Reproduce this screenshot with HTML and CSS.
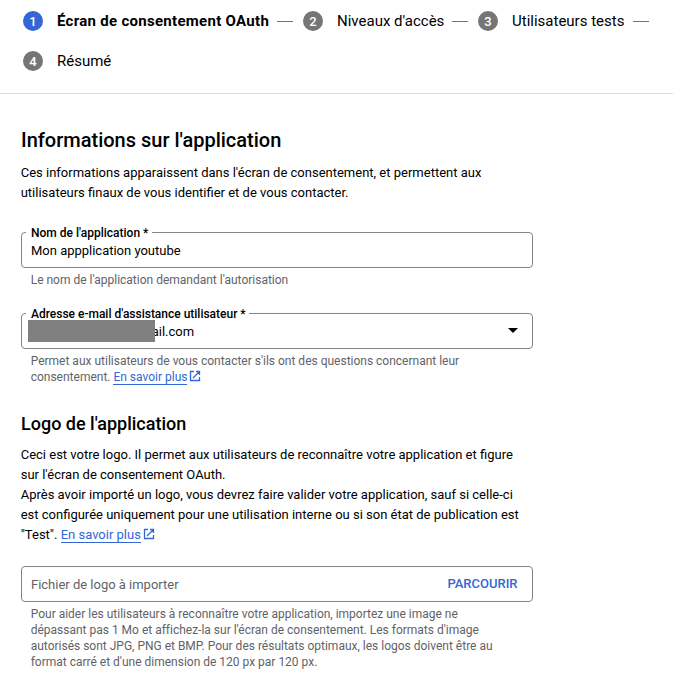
FILE: index.html
```html
<!DOCTYPE html>
<html lang="fr">
<head>
<meta charset="utf-8">
<title>Écran de consentement OAuth</title>
<link rel="stylesheet" href="styles.css">
</head>
<body>
<nav class="stepper">
  <div class="step s1 active"><span class="num">1</span><span class="label">Écran de consentement OAuth</span><i class="dash"></i></div>
  <div class="step s2"><span class="num">2</span><span class="label">Niveaux d'accès</span><i class="dash"></i></div>
  <div class="step s3"><span class="num">3</span><span class="label">Utilisateurs tests</span><i class="dash"></i></div>
  <div class="step"><span class="num">4</span><span class="label">Résumé</span></div>
</nav>
<main>
  <h1>Informations sur l'application</h1>
  <p class="intro">Ces informations apparaissent dans l'écran de consentement, et permettent aux<br>utilisateurs finaux de vous identifier et de vous contacter.</p>
  <div class="field name">
    <span class="legend">Nom de l'application *</span>
    <span class="value">Mon appplication youtube</span>
  </div>
  <p class="hint">Le nom de l'application demandant l'autorisation</p>
  <div class="field email">
    <span class="legend">Adresse e-mail d'assistance utilisateur *</span>
    <span class="mask"></span><span class="value">ail.com</span>
    <svg class="caret" width="10" height="5" viewBox="0 0 10 5"><path d="M0 0h10L5 5z"/></svg>
  </div>
  <p class="hint">Permet aux utilisateurs de vous contacter s'ils ont des questions concernant leur<br>consentement. <a>En savoir plus</a><svg class="ext" viewBox="0 0 12 12"><path d="M5 1.5H1.5v9h9V7M7 1.5h3.5V5M10.5 1.5L4 8"/></svg></p>
  <h2>Logo de l'application</h2>
  <p class="text">Ceci est votre logo. Il permet aux utilisateurs de reconnaître votre application et figure<br>sur l'écran de consentement OAuth.<br>Après avoir importé un logo, vous devrez faire valider votre application, sauf si celle-ci<br>est configurée uniquement pour une utilisation interne ou si son état de publication est<br>"Test". <a>En savoir plus</a><svg class="ext" viewBox="0 0 12 12"><path d="M5 1.5H1.5v9h9V7M7 1.5h3.5V5M10.5 1.5L4 8"/></svg></p>
  <div class="field upload">
    <span class="placeholder">Fichier de logo à importer</span>
    <span class="browse">PARCOURIR</span>
  </div>
  <p class="hint">Pour aider les utilisateurs à reconnaître votre application, importez une image ne<br>dépassant pas 1 Mo et affichez-la sur l'écran de consentement. Les formats d'image<br>autorisés sont JPG, PNG et BMP. Pour des résultats optimaux, les logos doivent être au<br>format carré et d'une dimension de 120 px par 120 px.</p>
</main>
</body>
</html>
```
FILE: styles.css
```css
* { box-sizing: border-box; }
body { margin: 0; background: #fff; color: #000; font: 13px/20px Roboto, sans-serif; white-space: nowrap; overflow: hidden; }
h1, h2, p { margin: 0; }
.stepper { display: flex; flex-wrap: wrap; height: 94px; padding: 1px 0 0 23px; align-content: flex-start; border-bottom: 1px solid #dadce0; }
.step { display: flex; align-items: center; height: 40px; font-size: 15px; }
.s1 { width: 280px; }
.s2 { width: 175px; }
.s3 { width: 175px; }
.num { width: 20px; height: 20px; margin-right: 14px; border-radius: 50%; background: #757575; color: #fff; font-size: 13px; font-weight: 500; line-height: 21px; text-align: center; }
.active .num { background: #3367d6; }
.active .label { font-weight: 700; letter-spacing: 0.29px; }
.dash { width: 16px; height: 1px; margin-left: 8px; background: #757575; }
.s3 .dash { margin-left: 9px; }
main { width: 533px; padding-left: 21px; }
h1 { margin-top: 34px; font-size: 20px; line-height: 24px; font-weight: 500; }
.intro { margin-top: 11px; margin-left: -0.3px; }
.field { position: relative; display: flex; align-items: center; width: 512px; height: 36px; padding: 0 9px; border: 1px solid #80868b; border-radius: 4px; }
.name { margin-top: 29px; }
.email { margin-top: 25px; padding-left: 6px; }
.upload { margin-top: 21px; justify-content: space-between; padding-right: 14.5px; }
.legend { position: absolute; left: 4px; top: -8px; padding: 0 4px 0 5px; background: #fff; font-size: 12px; line-height: 16px; font-weight: 500; }
.email .legend { padding-right: 3px; letter-spacing: -0.01px; }
.value, .placeholder { padding-top: 2px; letter-spacing: -0.01px; }
.mask { z-index: 1; width: 127px; height: 22px; background: #808080; }
.email .value { margin-left: -3.3px; }
.caret { margin-left: auto; margin-right: 5px; margin-bottom: 1px; }
.hint { margin: 4px 0 0 9.7px; color: #5f6368; font-size: 12px; line-height: 16px; letter-spacing: -0.004px; }
a { color: #3367d6; border-bottom: 1px solid #3367d6; }
.ext { width: 12px; height: 12px; margin-left: 2px; vertical-align: -1px; fill: none; stroke: #3367d6; stroke-width: 1.3; }
.hint .ext { margin-left: 1.5px; }
h2 { margin-top: 27px; font-size: 18px; line-height: 24px; font-weight: 500; }
.text { margin-top: 9px; margin-left: -0.3px; }
.placeholder { color: #5f6368; }
.browse { color: #3367d6; font-weight: 500; }
```
